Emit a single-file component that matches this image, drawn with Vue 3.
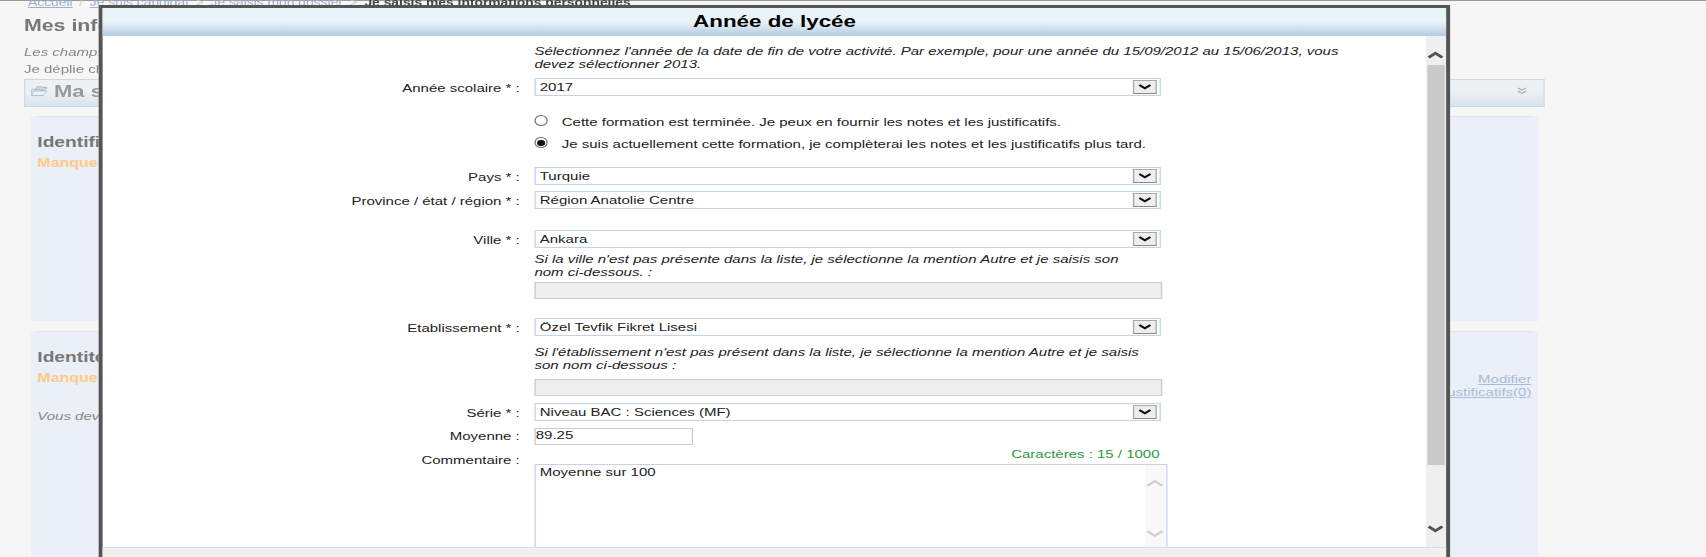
<template>
  <div class="viewport">
    <div class="stage">
      <div class="page">
        <div class="crumbs">
          <a>Accueil</a><span class="sep">/</span><a>Je suis candidat</a><span class="sep">&gt;</span><a>Je saisis mon dossier</a><span class="sep">&gt;</span><b>Je saisis mes informations personnelles</b>
        </div>
        <h1>Mes informations personnelles</h1>
        <p class="note">Les champs marqués d'un * sont obligatoires</p>
        <p class="unfold">Je déplie chaque rubrique pour compléter mon dossier</p>
        <div class="bar">
          <svg class="folder" viewBox="0 0 20 16" width="13" height="12">
            <path d="M1 5h5l1-2h7v3" fill="#eef3f8" stroke="#b9c9da" />
            <path d="M1 6h13v9H1z" fill="#dbe7f3" stroke="#a9c0d8" />
            <path d="M5 6 8 1l11 2-3 4z" fill="#d8d8d8" stroke="#aaa" />
            <path d="M1 15l3-7h15l-4 7z" fill="#eaf1f8" stroke="#9fb8d2" />
          </svg>
          <span class="bar-title">Ma situation</span>
          <svg class="dbl" viewBox="0 0 10 10" width="8" height="10">
            <path d="M1 1l4 3 4-3M1 5l4 3 4-3" fill="none" stroke="#a8a8a8" stroke-width="1.3" />
          </svg>
        </div>
        <section class="card first">
          <h2>Identifiants</h2>
          <div class="missing">Manque justificatif</div>
        </section>
        <section class="card second">
          <div class="links"><a>Modifier</a><a>Justificatifs(0)</a></div>
          <h2>Identité</h2>
          <div class="missing">Manque justificatif</div>
          <p class="note must">Vous devez compléter cette rubrique</p>
        </section>
      </div>

      <div class="modal">
        <div class="title">Année de lycée</div>
        <div class="body">
          <div class="form">
            <div class="row"><span></span><div class="hint wide">Sélectionnez l'année de la date de fin de votre activité. Par exemple, pour une année du 15/09/2012 au 15/06/2013, vous devez sélectionner 2013.</div></div>

            <div class="row m7"><label>Année scolaire * :</label>
              <div class="select"><span>2017</span><i class="btn"><svg viewBox="0 0 12 7" width="10" height="6"><path d="M1 1l5 4 5-4" /></svg></i></div>
            </div>

            <div class="row m19"><span></span><div class="radio"><i class="dot"></i><span>Cette formation est terminée. Je peux en fournir les notes et les justificatifs.</span></div></div>
            <div class="row m8"><span></span><div class="radio"><i class="dot on"></i><span>Je suis actuellement cette formation, je complèterai les notes et les justificatifs plus tard.</span></div></div>

            <div class="row m16"><label>Pays * :</label>
              <div class="select"><span>Turquie</span><i class="btn"><svg viewBox="0 0 12 7" width="10" height="6"><path d="M1 1l5 4 5-4" /></svg></i></div>
            </div>
            <div class="row m6"><label>Province / état / région * :</label>
              <div class="select"><span>Région Anatolie Centre</span><i class="btn"><svg viewBox="0 0 12 7" width="10" height="6"><path d="M1 1l5 4 5-4" /></svg></i></div>
            </div>
            <div class="row m21"><label>Ville * :</label>
              <div class="select"><span>Ankara</span><i class="btn"><svg viewBox="0 0 12 7" width="10" height="6"><path d="M1 1l5 4 5-4" /></svg></i></div>
            </div>
            <div class="row m5"><span></span><div class="hint">Si la ville n'est pas présente dans la liste, je sélectionne la mention Autre et je saisis son nom ci-dessous. :</div></div>
            <div class="row m3"><span></span><div class="disabled"></div></div>

            <div class="row m19"><label>Etablissement * :</label>
              <div class="select"><span>Özel Tevfik Fikret Lisesi</span><i class="btn"><svg viewBox="0 0 12 7" width="10" height="6"><path d="M1 1l5 4 5-4" /></svg></i></div>
            </div>
            <div class="row m10"><span></span><div class="hint">Si l'établissement n'est pas présent dans la liste, je sélectionne la mention Autre et je saisis son nom ci-dessous :</div></div>
            <div class="row m7"><span></span><div class="disabled"></div></div>

            <div class="row m7"><label>Série * :</label>
              <div class="select"><span>Niveau BAC : Sciences (MF)</span><i class="btn"><svg viewBox="0 0 12 7" width="10" height="6"><path d="M1 1l5 4 5-4" /></svg></i></div>
            </div>
            <div class="row m7"><label class="flat">Moyenne :</label><div class="short">89.25</div></div>

            <div class="row m3 comment">
              <label class="flat">Commentaire :</label>
              <div class="comment-col">
                <div class="count">Caractères : 15 / 1000</div>
                <div class="textarea">
                  <span class="ta-text">Moyenne sur 100</span>
                  <div class="ta-scroll">
                    <svg viewBox="0 0 14 8" width="13" height="8"><path d="M1 7l6-5 6 5" /></svg>
                    <svg viewBox="0 0 14 8" width="13" height="8"><path d="M1 1l6 5 6-5" /></svg>
                  </div>
                </div>
              </div>
            </div>
          </div>
          <div class="scrollbar">
            <div class="sb-up"><svg viewBox="0 0 14 8" width="12" height="8"><path d="M1 7l6-5 6 5" /></svg></div>
            <div class="sb-thumb"></div>
            <div class="sb-down"><svg viewBox="0 0 14 8" width="12" height="8"><path d="M1 1l6 5 6-5" /></svg></div>
          </div>
        </div>
        <div class="footer"></div>
      </div>
    </div>
  </div>
</template>

<script setup>
</script>

<style>
html, body { margin: 0; overflow: hidden; background: #f6f6f6; }
</style>

<style scoped>
.viewport { width: 1706px; height: 557px; overflow: hidden; position: relative; background: #f6f6f6; }
.stage {
  width: 1280px; height: 557px; position: relative; overflow: hidden;
  transform: scaleX(1.3328); transform-origin: 0 0;
  font-family: "Liberation Sans", Arial, sans-serif; font-size: 11.26px; color: #222;
  filter: blur(0.35px);
}
.page { border-top: 1px solid #999; padding: 0 0 0 18px; height: 556px; box-sizing: border-box; }
.crumbs { margin-top: -4px; height: 12px; line-height: 12px; color: #888; white-space: nowrap; padding-left: 3px; font-size: 10.4px; }
.crumbs a { color: #9cb0cc; text-decoration: underline; }
.crumbs b { color: #444; }
.crumbs .sep { color: #ccc; margin: 0 5px; }
h1 { margin: 7px 0 0; font-size: 16px; line-height: 20px; color: #777; }
.note { margin: 10px 0 0; font-style: italic; color: #888; line-height: 13px; }
.unfold { margin: 4px 0 0; color: #888; line-height: 13px; }
.bar {
  margin-top: 3px; width: 1141px; height: 28px; box-sizing: border-box; display: flex; align-items: center;
  border: 1px solid #c9d9e8; background: linear-gradient(#eef1f4 45%, #d7e3ee); padding: 0 12.5px 4px 3.5px;
}
.folder { margin-right: 5px; }
.bar-title { font-weight: bold; font-size: 16.5px; color: #999; flex: 1; }
.card { margin-left: 5px; width: 1131px; background: #ebeff7; box-sizing: border-box; padding: 18px 0 0 5px; position: relative; }
.card::before { content: ""; position: absolute; top: 0; left: 5px; right: 5px; height: 1px; background: #dde5ef; }
.card.first { margin-top: 9px; height: 205px; }
.card.second { margin-top: 10px; height: 230px; }
h2 { margin: 0; font-size: 14.4px; line-height: 16px; color: #777; }
.missing { margin-top: 6px; font-weight: bold; font-size: 12px; line-height: 14px; color: #fdcb85; }
.must { margin-top: 25px; }
.links { position: absolute; right: 5px; top: 42px; display: flex; flex-direction: column; align-items: flex-end; line-height: 13px; }
.links a { color: #a9bcd8; text-decoration: underline; }

.modal { position: absolute; left: 74.3px; top: 5px; width: 1013.7px; height: 560px; box-sizing: border-box; border: 3px solid #555; background: #fff; display: flex; flex-direction: column; }
.title { flex: none; height: 28px; line-height: 28px; text-align: center; font-weight: bold; font-size: 16.8px; color: #000; background: linear-gradient(#e9f3fa 50%, #b9cee1 95%); }
.body { flex: none; height: 511px; display: flex; overflow: hidden; }
.form { flex: 1; min-width: 0; padding-top: 9px; }
.row { display: grid; grid-template-columns: 312.7px 1fr; column-gap: 11px; align-items: start; }
.m3 { margin-top: 3px; } .m5 { margin-top: 5px; } .m6 { margin-top: 6px; } .m7 { margin-top: 7px; }
.m8 { margin-top: 8px; } .m10 { margin-top: 10px; } .m16 { margin-top: 16px; } .m19 { margin-top: 19px; } .m21 { margin-top: 21px; }
label { text-align: right; line-height: 14px; padding-top: 3px; }
label.flat { padding-top: 1px; }
.hint { width: 457px; font-style: italic; line-height: 13px; }
.hint.wide { width: 625px; }
.select { width: 470px; height: 18px; box-sizing: border-box; border: 1px solid #c3d4e8; padding: 0 2px 0 3px; display: flex; align-items: center; justify-content: space-between; background: #fff; }
.btn { width: 18px; height: 14px; box-sizing: border-box; border: 1px solid #aaa; border-bottom-color: #888; background: #eee; display: flex; align-items: center; justify-content: center; }
.btn svg path { fill: none; stroke: #111; stroke-width: 2.2; }
.radio { display: flex; align-items: center; height: 14px; }
.dot { width: 10.5px; height: 11px; margin: -3px 10px 0 0; box-sizing: border-box; border: 1px solid #777; border-radius: 50%; background: #fff; position: relative; flex: none; }
.dot.on::after { content: ""; position: absolute; inset: 1.5px; background: #111; border-radius: 50%; }
.disabled { width: 471.5px; height: 17px; box-sizing: border-box; background: #eee; border: 1px solid #ccc; }
.short { width: 119px; height: 17px; box-sizing: border-box; border: 1px solid #ccc; line-height: 13px; padding-left: 0; }
.comment label { padding-top: 5px; }
.comment-col { width: 475px; }
.count { width: 469px; text-align: right; color: #2a9a3c; line-height: 13px; }
.textarea { margin-top: 3px; height: 120px; box-sizing: border-box; border: 1px solid #c3d4e8; padding: 0 0 0 3px; display: flex; justify-content: space-between; line-height: 14px; }
.ta-scroll { width: 16px; background: #f8f8f8; padding-top: 14px; display: flex; flex-direction: column; align-items: center; gap: 43px; height: 80px; }
.ta-scroll svg path { fill: none; stroke: #ccc; stroke-width: 2; }
.scrollbar { flex: none; width: 15px; background: #efefef; display: flex; flex-direction: column; }
.sb-up { height: 29px; display: flex; align-items: center; justify-content: center; padding-top: 9px; box-sizing: border-box; }
.sb-thumb { height: 400px; background: #c9c9c9; margin: 0 1px; }
.sb-down { flex: 1; display: flex; justify-content: center; padding-top: 60px; }
.scrollbar path { fill: none; stroke: #555; stroke-width: 3; }
.footer { flex: 1; background: #f0f0f0; border-top: 1px solid #ddd; }
</style>
